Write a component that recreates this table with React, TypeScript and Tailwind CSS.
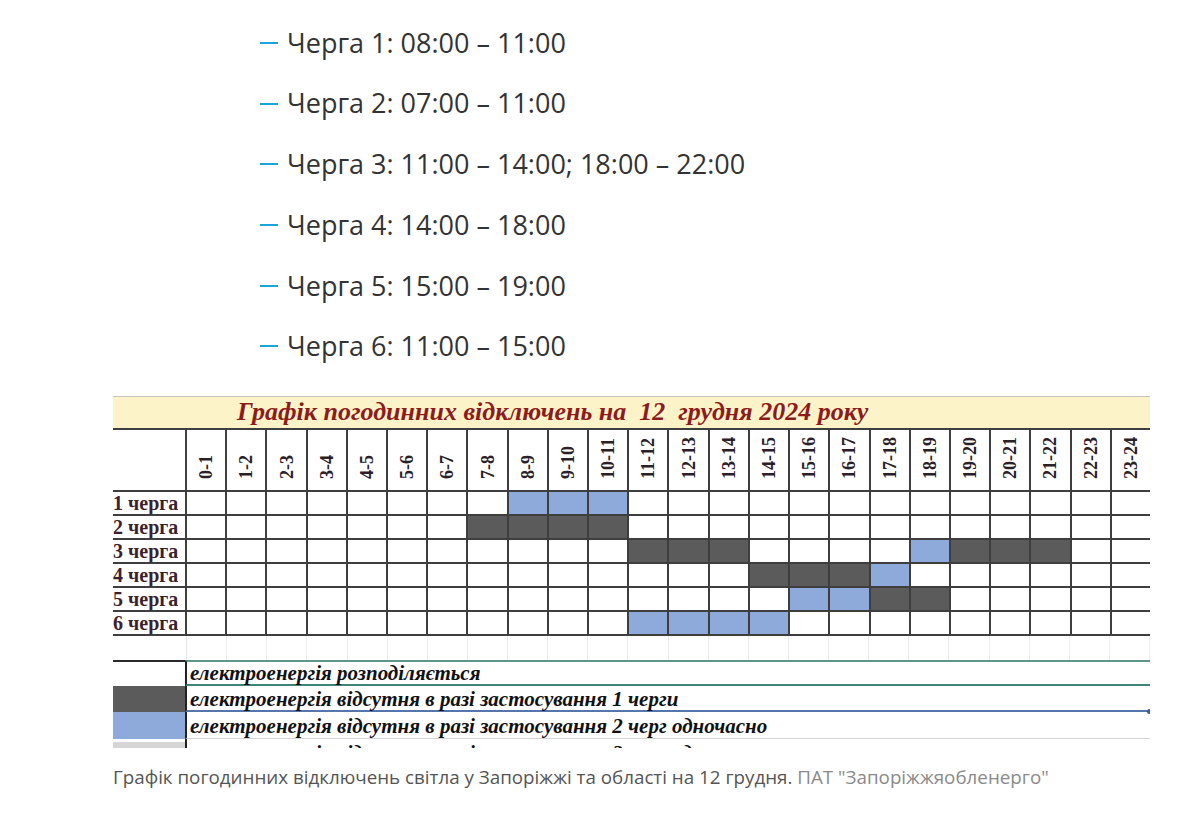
const queues = [
  "Черга 1: 08:00 – 11:00",
  "Черга 2: 07:00 – 11:00",
  "Черга 3: 11:00 – 14:00; 18:00 – 22:00",
  "Черга 4: 14:00 – 18:00",
  "Черга 5: 15:00 – 19:00",
  "Черга 6: 11:00 – 15:00",
];

const hours = Array.from({ length: 24 }, (_, i) => `${i}-${i + 1}`);

// 0 = light, 1 = off (one queue), 2 = off (two queues)
const schedule: number[][] = [
  [0, 0, 0, 0, 0, 0, 0, 0, 2, 2, 2, 0, 0, 0, 0, 0, 0, 0, 0, 0, 0, 0, 0, 0],
  [0, 0, 0, 0, 0, 0, 0, 1, 1, 1, 1, 0, 0, 0, 0, 0, 0, 0, 0, 0, 0, 0, 0, 0],
  [0, 0, 0, 0, 0, 0, 0, 0, 0, 0, 0, 1, 1, 1, 0, 0, 0, 0, 2, 1, 1, 1, 0, 0],
  [0, 0, 0, 0, 0, 0, 0, 0, 0, 0, 0, 0, 0, 0, 1, 1, 1, 2, 0, 0, 0, 0, 0, 0],
  [0, 0, 0, 0, 0, 0, 0, 0, 0, 0, 0, 0, 0, 0, 0, 2, 2, 1, 1, 0, 0, 0, 0, 0],
  [0, 0, 0, 0, 0, 0, 0, 0, 0, 0, 0, 2, 2, 2, 2, 0, 0, 0, 0, 0, 0, 0, 0, 0],
];

const cellColor = ["bg-white", "bg-[#5b5b5b]", "bg-[#8eaadb]"];

function ScheduleImage() {
  return (
    <div className="w-[1037px] h-[352px] overflow-hidden bg-white font-['Liberation_Serif',serif]">
      {/* title */}
      <div className="h-[32px] border-t border-[#c4c4c4] bg-[#fcf3c9] pl-[124px] text-[26px] leading-[30px] font-bold italic text-[#8c1c1c] whitespace-pre">
        Графік погодинних відключень на  12  грудня 2024 року
      </div>

      {/* grid */}
      <div className="grid grid-cols-[72px_repeat(24,1fr)] grid-rows-[60px_repeat(6,22px)] gap-[2px] bg-[#3e3e3e] py-[2px]">
        <div className="bg-white" />
        {hours.map((h) => (
          <div key={h} className="bg-white flex items-end justify-center pb-[11px]">
            <span className="[writing-mode:vertical-rl] rotate-180 text-[18px] font-bold text-[#2a2026] leading-none">
              {h}
            </span>
          </div>
        ))}
        {schedule.map((row, r) => (
          <div key={r} className="contents">
            <div className="bg-white text-[20px] font-bold leading-[22px] text-[#3d1f2d] whitespace-nowrap overflow-hidden">
              {r + 1} черга
            </div>
            {row.map((v, c) => (
              <div key={c} className={cellColor[v]} />
            ))}
          </div>
        ))}
      </div>

      {/* faint spreadsheet gridlines */}
      <div className="grid grid-cols-[74px_repeat(24,1fr)] h-[24px]">
        <div className="border-r border-[#e6e6e6]" />
        {hours.map((h) => (
          <div key={h} className="border-r border-[#ececec]" />
        ))}
      </div>

      {/* legend */}
      <div className="relative text-[21px] font-bold italic text-[#111] whitespace-nowrap">
        <div className="flex h-[26px]">
          <div className="w-[72px] bg-white border-t-2 border-[#2b2b2b]" />
          <div className="flex-1 border-l-2 border-[#222] border-t-2 border-t-[#5d9689] border-b-2 border-b-[#3f8479] pl-[3px] pt-[1px] leading-[21px]">
            електроенергія розподіляється
          </div>
        </div>
        <div className="flex h-[26px]">
          <div className="w-[72px] bg-[#5b5b5b]" />
          <div className="flex-1 border-l-2 border-[#222] border-b-2 border-b-[#5576ad] pl-[3px] pt-[3px] leading-[21px]">
            електроенергія відсутня в разі застосування 1 черги
          </div>
        </div>
        <div className="flex h-[27px]">
          <div className="w-[72px] bg-[#8eaadb]" />
          <div className="flex-1 border-l-2 border-[#222] border-b border-b-[#d4d4d4] pl-[3px] pt-[3px] leading-[23px]">
            електроенергія відсутня в разі застосування 2 черг одночасно
          </div>
        </div>
        <div className="flex h-[30px]">
          <div className="w-[72px] bg-[#d6d6d6] mt-[3px]" />
          <div className="flex-1 border-l-2 border-[#222] pl-[3px] pt-[2px] leading-[24px]">
            електроенергія відсутня в разі застосування 3 черг одночасно
          </div>
        </div>
        <span className="absolute right-[-2px] top-[49px] w-[5px] h-[5px] rounded-full bg-[#3d5f99]" />
      </div>
    </div>
  );
}

export default function App() {
  return (
    <div className="min-h-[831px] w-[1200px] bg-white font-['Open_Sans',sans-serif]">
      <ul className="pl-[260px] pt-[23px] flex flex-col gap-y-[20.7px]">
        {queues.map((q) => (
          <li key={q} className="flex items-center h-[40px] text-[27px] text-[#333333]">
            <span className="w-[18px] h-[2px] bg-[#1aa5d8] mr-[9px] shrink-0" />
            {q}
          </li>
        ))}
      </ul>

      <div className="ml-[113px] mt-[30px]">
        <ScheduleImage />
      </div>

      <p className="ml-[113px] mt-[16px] text-[18.8px] leading-[26px] text-[#555555]">
        Графік погодинних відключень світла у Запоріжжі та області на 12 грудня.{" "}
        <span className="text-[#8a8a8a]">ПАТ "Запоріжжяобленерго"</span>
      </p>
    </div>
  );
}
